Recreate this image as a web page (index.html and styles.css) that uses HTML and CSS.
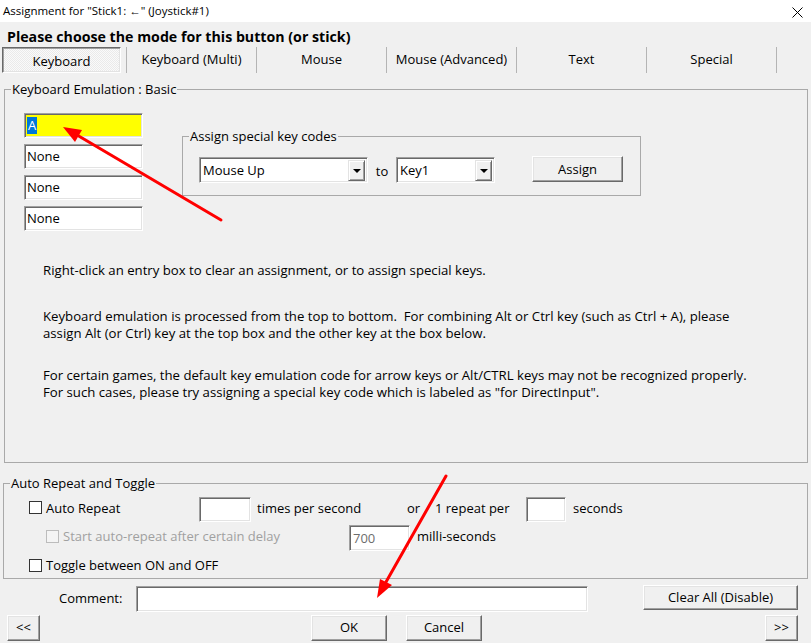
FILE: index.html
```html
<!DOCTYPE html>
<html>
<head>
<meta charset="utf-8">
<link rel="stylesheet" href="styles.css">
</head>
<body>
<div class="titlebar">
  <span class="title">Assignment for "Stick1: ←" (Joystick#1)</span>
  <svg class="close" width="11" height="11" viewBox="0 0 11 11"><path d="M0.5 0.5L10.5 10.5M10.5 0.5L0.5 10.5" stroke="#000" stroke-width="1" fill="none"/></svg>
</div>
<div class="client">
  <div class="heading">Please choose the mode for this button (or stick)</div>
  <div class="tabs">
    <div class="tab tab-first"><span class="tab-pressed">Keyboard</span></div>
    <div class="tab">Keyboard (Multi)</div>
    <div class="tab">Mouse</div>
    <div class="tab">Mouse (Advanced)</div>
    <div class="tab">Text</div>
    <div class="tab">Special</div>
  </div>

  <div class="group main-group">
    <span class="legend">Keyboard Emulation : Basic</span>
    <div class="top-row">
      <div class="key-col">
        <div class="edit key-edit key-active"><span class="sel">A</span></div>
        <div class="edit key-edit">None</div>
        <div class="edit key-edit">None</div>
        <div class="edit key-edit">None</div>
      </div>
      <div class="group assign-group">
        <span class="legend">Assign special key codes</span>
        <div class="assign-row">
          <div class="combo combo-1"><span class="combo-text">Mouse Up</span><span class="combo-btn"><span class="tri"></span></span></div>
          <span class="to">to</span>
          <div class="combo combo-2"><span class="combo-text">Key1</span><span class="combo-btn"><span class="tri"></span></span></div>
          <div class="btn assign-btn">Assign</div>
        </div>
      </div>
    </div>
    <div class="help">
      <p class="p1">Right-click an entry box to clear an assignment, or to assign special keys.</p>
      <p class="p2">Keyboard emulation is processed from the top to bottom.&nbsp; For combining Alt or Ctrl key (such as Ctrl + A), please<br>assign Alt (or Ctrl) key at the top box and the other key at the box below.</p>
      <p class="p3">For certain games, the default key emulation code for arrow keys or Alt/CTRL keys may not be recognized properly.<br>For such cases, please try assigning a special key code which is labeled as "for DirectInput".</p>
    </div>
  </div>

  <div class="group auto-group">
    <span class="legend">Auto Repeat and Toggle</span>
    <div class="row row1">
      <div class="cell c-auto"><span class="check"></span><span>Auto Repeat</span></div>
      <div class="edit e-times"></div>
      <div class="cell c-times">times per second</div>
      <div class="cell c-or">or</div>
      <div class="cell c-per">1 repeat per</div>
      <div class="edit e-secs"></div>
      <div class="cell c-secs">seconds</div>
    </div>
    <div class="row row2">
      <div class="cell c-start disabled"><span class="check check-dis"></span><span>Start auto-repeat after certain delay</span></div>
      <div class="edit e-delay">700</div>
      <div class="cell c-ms">milli-seconds</div>
    </div>
    <div class="row row3">
      <div class="cell c-toggle"><span class="check"></span><span>Toggle between ON and OFF</span></div>
    </div>
  </div>

  <div class="comment-row">
    <span class="comment-label">Comment:</span>
    <div class="edit comment-edit"></div>
    <div class="btn clear-btn">Clear All (Disable)</div>
  </div>

  <div class="button-row">
    <div class="btn nav-btn">&lt;&lt;</div>
    <div class="btn ok-btn">OK</div>
    <div class="btn cancel-btn">Cancel</div>
    <div class="btn nav-btn next-btn">&gt;&gt;</div>
  </div>
</div>

<svg class="annot" width="811" height="643" viewBox="0 0 811 643">
  <line x1="221" y1="220" x2="77" y2="135" stroke="#f00" stroke-width="3" stroke-linecap="round"/>
  <polygon points="63,127 82,130 75,142" fill="#f00"/>
  <line x1="446" y1="476" x2="386" y2="582" stroke="#f00" stroke-width="3" stroke-linecap="round"/>
  <polygon points="377,598 392,585 380,579" fill="#f00"/>
</svg>
</body>
</html>
```
FILE: styles.css
```css
* { box-sizing: border-box; }
html, body { margin: 0; padding: 0; }
body {
  width: 811px;
  height: 643px;
  background: #f0f0f0;
  font-family: "Open Sans", "Noto Sans", sans-serif;
  font-size: 13px;
  color: #000;
  position: relative;
  overflow: hidden;
}
.titlebar {
  height: 22px;
  background: #fff;
  display: flex;
  align-items: center;
  justify-content: space-between;
  padding: 0 8px 0 3px;
}
.title { font-size: 11.5px; line-height: 22px; }
.close { display: block; margin-top: 2px; }

.heading {
  height: 25px;
  padding: 5px 0 0 7px;
  line-height: 20px;
  font-weight: 700;
  font-size: 14.2px;
}

.tabs {
  display: flex;
  height: 26px;
}
.tab {
  width: 130px;
  flex: none;
  border-right: 1px solid #b4b4b4;
  display: flex;
  align-items: center;
  justify-content: center;
  line-height: 24px;
  padding-bottom: 2px;
}
.tab-first {
  width: 127px;
  justify-content: flex-start;
  padding-left: 2px;
  padding-bottom: 0;
}
.tab-pressed {
  display: block;
  width: 119px;
  height: 26px;
  line-height: 26px;
  text-align: center;
  background-color: #fafafa;
  background-image: linear-gradient(45deg, #eaeaea 25%, transparent 25%, transparent 75%, #eaeaea 75%), linear-gradient(45deg, #eaeaea 25%, transparent 25%, transparent 75%, #eaeaea 75%);
  background-size: 2px 2px;
  background-position: 0 0, 1px 1px;
  border: 1px solid;
  border-color: #696969 #fff #fff #696969;
  box-shadow: inset 1px 1px #a0a0a0, inset -1px -1px #e3e3e3;
}

.group {
  position: relative;
  border: 1px solid #a9a9a9;
}
.legend {
  position: absolute;
  top: -10px;
  left: 6px;
  padding: 0 1px;
  background: #f0f0f0;
  line-height: 18px;
  white-space: nowrap;
}

.main-group {
  margin: 16px 3px 0 4px;
  height: 374px;
  padding: 23px 0 0 19px;
}
.top-row {
  display: flex;
  align-items: flex-start;
}
.key-col {
  width: 119px;
  display: flex;
  flex-direction: column;
  gap: 6px;
}
.edit {
  background: #fff;
  border: 1px solid;
  border-color: #a0a0a0 #fff #fff #a0a0a0;
  box-shadow: inset 1px 1px #696969, inset -1px -1px #e3e3e3;
  height: 25px;
  line-height: 23px;
  padding-left: 2px;
  white-space: nowrap;
}
.key-edit { width: 119px; }
.key-active { background: #ffff00; }
.sel {
  background: #0078d7;
  color: #fff;
  padding: 0 1px;
  line-height: 17px;
  display: inline-block;
}

.assign-group {
  margin: 23px 0 0 39px;
  width: 459px;
  height: 60px;
  padding: 20px 0 0 16px;
}
.assign-row {
  display: flex;
  align-items: flex-start;
}
.combo {
  position: relative;
  height: 26px;
  background: #fff;
  border: 1px solid;
  border-color: #a0a0a0 #fff #fff #a0a0a0;
  box-shadow: inset 1px 1px #696969, inset -1px -1px #e3e3e3;
  display: flex;
  padding: 2px;
}
.combo-1 { width: 169px; }
.combo-2 { width: 99px; }
.combo-text {
  flex: 1;
  line-height: 20px;
  padding-left: 1px;
}
.combo-btn {
  width: 17px;
  height: 21px;
  background: #f0f0f0;
  border: 1px solid;
  border-color: #e3e3e3 #696969 #696969 #e3e3e3;
  box-shadow: inset 1px 1px #fff, inset -1px -1px #a0a0a0;
  display: flex;
  align-items: center;
  justify-content: center;
}
.tri {
  width: 0;
  height: 0;
  border-left: 4px solid transparent;
  border-right: 4px solid transparent;
  border-top: 4px solid #000;
}
.to {
  width: 28px;
  text-align: center;
  line-height: 28px;
}

.btn {
  background: #f0f0f0;
  border: 1px solid;
  border-color: #fff #696969 #696969 #fff;
  box-shadow: inset -1px -1px #a0a0a0, inset 1px 1px #e3e3e3;
  text-align: center;
  height: 26px;
  line-height: 24px;
  white-space: nowrap;
}
.assign-btn {
  width: 91px;
  margin: -1px 0 0 37px;
}

.help {
  margin: 31px 0 0 19px;
  line-height: 17px;
  font-size: 13.2px;
}
.help p { margin: 0; }
.help .p2 { margin-top: 29px; }
.help .p3 { margin-top: 25px; }

.auto-group {
  margin: 20px 3px 0 3px;
  height: 96px;
  padding: 13px 0 0 25px;
}
.row {
  display: flex;
  align-items: center;
}
.row1 { height: 25px; }
.row2 { height: 26px; margin-top: 3px; padding-left: 17px; }
.row3 { height: 20px; margin-top: 3px; }
.cell {
  display: flex;
  align-items: center;
  white-space: nowrap;
}
.row1 .cell, .row2 .cell { margin-top: -4px; }
.check {
  width: 13px;
  height: 13px;
  border: 1px solid #333;
  background: #fff;
  margin-right: 4px;
  flex: none;
}
.check-dis {
  border-color: #bcbcbc;
  background: #f4f4f4;
}
.disabled { color: #a0a0a0; }
.c-auto { width: 170px; }
.e-times { width: 52px; }
.c-times { width: 156px; padding-left: 6px; }
.c-or { width: 28px; }
.c-per { width: 91px; }
.e-secs { width: 40px; }
.c-secs { padding-left: 7px; }
.c-start { width: 303px; }
.e-delay { width: 61px; height: 26px; line-height: 24px; color: #6d6d6d; padding-left: 3px; }
.c-ms { padding-left: 7px; }
.c-toggle { width: 300px; margin-top: 2px; }

.comment-row {
  display: flex;
  align-items: flex-start;
  margin-top: 6px;
  height: 27px;
}
.comment-label {
  width: 136px;
  padding-left: 59px;
  line-height: 26px;
}
.comment-edit {
  width: 452px;
  height: 26px;
  margin-top: 1px;
}
.clear-btn {
  width: 155px;
  height: 25px;
  line-height: 22px;
  margin-left: 55px;
}

.button-row {
  display: flex;
  margin-top: 3px;
  padding-left: 7px;
}
.button-row .btn { height: 26px; line-height: 22px; }
.nav-btn { width: 33px; }
.ok-btn { width: 76px; margin-left: 271px; }
.cancel-btn { width: 76px; margin-left: 19px; }
.next-btn { margin-left: 283px; }

.annot {
  position: absolute;
  left: 0;
  top: 0;
  pointer-events: none;
}
```
